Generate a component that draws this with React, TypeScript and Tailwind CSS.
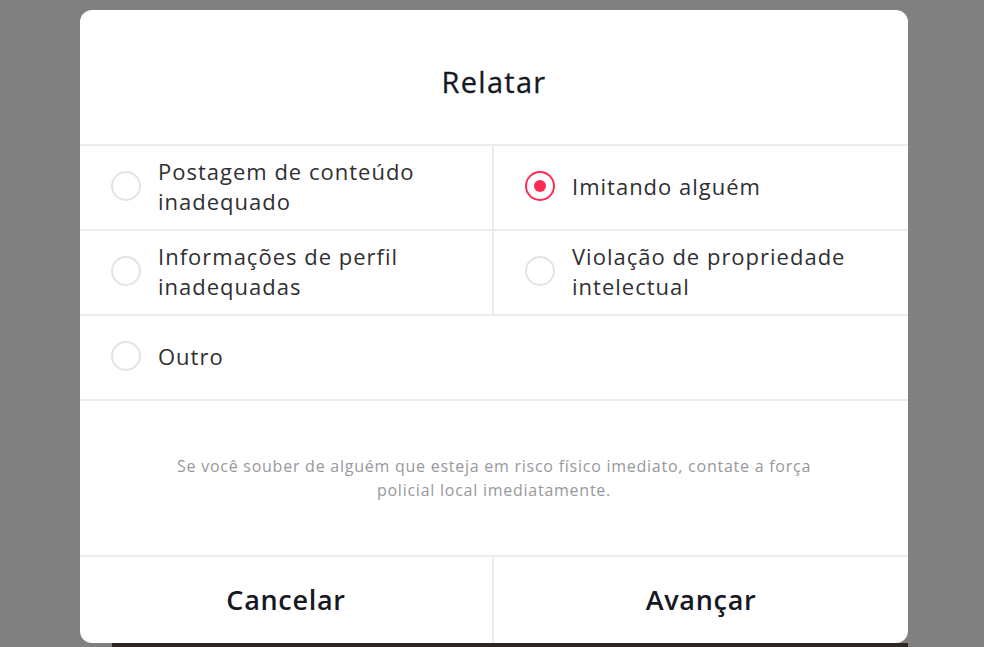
import { useState } from "react";

const options = [
  { id: "post", lines: ["Postagem de conteúdo", "inadequado"] },
  { id: "fake", lines: ["Imitando alguém"] },
  { id: "profile", lines: ["Informações de perfil", "inadequadas"] },
  { id: "ip", lines: ["Violação de propriedade", "intelectual"] },
];

const Radio = ({ checked }: { checked: boolean }) => (
  <span
    className={
      checked
        ? "flex h-[30px] w-[30px] shrink-0 items-center justify-center rounded-full border-2 border-[#fe2c55]"
        : "flex h-[30px] w-[30px] shrink-0 items-center justify-center rounded-full border-2 border-[#e3e3e4]"
    }
  >
    {checked && <span className="h-[12px] w-[12px] rounded-full bg-[#fe2c55]" />}
  </span>
);

export default function App() {
  const [reason, setReason] = useState("fake");

  return (
    <div
      className="h-[647px] w-[984px] overflow-hidden bg-[#808080] pt-[10px]"
      style={{ fontFamily: "'Open Sans', 'Liberation Sans', sans-serif" }}
    >
      <div className="ml-[80px] flex h-[633px] w-[828px] flex-col overflow-hidden rounded-[12px] bg-white">
        <div className="flex h-[136px] items-center justify-center border-b-2 border-[#ececec] pt-[10px]">
          <h2 className="text-[29px] font-medium tracking-[1.3px] text-[#161823] [-webkit-text-stroke:0.3px_#161823]">
            Relatar
          </h2>
        </div>

        <div className="grid grid-cols-2">
          {options.map((o, i) => (
            <button
              key={o.id}
              onClick={() => setReason(o.id)}
              className={
                i % 2 === 0
                  ? "flex h-[85px] items-center gap-[17px] border-b-2 border-r-2 border-[#ececec] pb-[3px] pl-[31px] text-left"
                  : "flex h-[85px] items-center gap-[17px] border-b-2 border-[#ececec] pb-[3px] pl-[31px] text-left"
              }
            >
              <Radio checked={reason === o.id} />
              <span className="text-[22px] leading-[30px] tracking-[1px] text-[#2f2f33]">
                {o.lines.map((l) => (
                  <span key={l} className="block">
                    {l}
                  </span>
                ))}
              </span>
            </button>
          ))}
          <button
            onClick={() => setReason("other")}
            className="col-span-2 flex h-[85px] items-center gap-[17px] border-b-2 border-[#ececec] pb-[3px] pl-[31px] text-left"
          >
            <Radio checked={reason === "other"} />
            <span className="text-[22px] leading-[30px] tracking-[1px] text-[#2f2f33]">Outro</span>
          </button>
        </div>

        <div className="flex h-[156px] items-center justify-center border-b-2 border-[#ececec]">
          <p className="text-center text-[16px] leading-[24px] tracking-[0.75px] text-[#97989c]">
            Se você souber de alguém que esteja em risco físico imediato, contate a força
            <br />
            policial local imediatamente.
          </p>
        </div>

        <div className="grid flex-1 grid-cols-2">
          <button className="border-r-2 border-[#ececec] text-[27px] font-semibold tracking-[0.7px] text-[#161823]">
            Cancelar
          </button>
          <button className="text-[27px] font-semibold tracking-[0.7px] text-[#161823]">Avançar</button>
        </div>
      </div>
      <div className="ml-[112px] h-[4px] w-[796px] bg-[#2b2622]" />
    </div>
  );
}
